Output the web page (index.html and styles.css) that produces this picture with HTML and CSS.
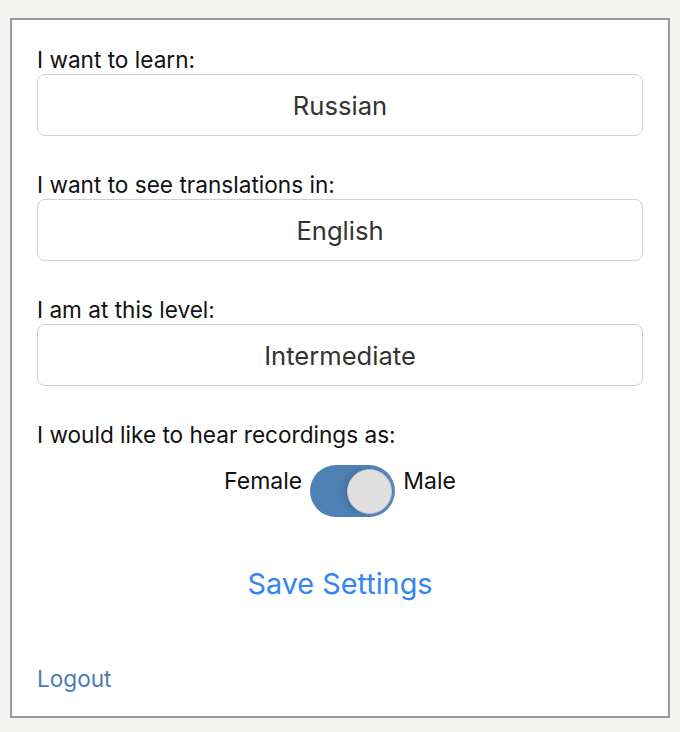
FILE: index.html
```html
<!DOCTYPE html>
<html lang="en">
<head>
    <meta charset="UTF-8">
    <meta name="viewport" content="width=device-width, initial-scale=1.0">
    <title>Settings</title>
    <link rel="stylesheet" href="styles.css">
</head>
<body>
    <div class="card">
        <div class="field">
            <label class="field-label">I want to learn:</label>
            <div class="select-box">Russian</div>
        </div>
        <div class="field">
            <label class="field-label">I want to see translations in:</label>
            <div class="select-box">English</div>
        </div>
        <div class="field">
            <label class="field-label">I am at this level:</label>
            <div class="select-box">Intermediate</div>
        </div>
        <div class="field">
            <label class="field-label">I would like to hear recordings as:</label>
            <div class="voice-row">
                <span class="voice">Female</span>
                <div class="toggle"><div class="knob"></div></div>
                <span class="voice">Male</span>
            </div>
        </div>
        <div class="save">Save Settings</div>
        <a class="logout" href="#">Logout</a>
    </div>
</body>
</html>
```

FILE: styles.css
```css
body {
    font-family: Inter, "Noto Sans", sans-serif;
    background: #f3f3f1;
    margin: 0;
    padding: 18px 10px 0;
    color: #111;
}
.card {
    background: white;
    border: 2px solid #999;
    padding: 28px 25px 23px;
    height: 700px;
    box-sizing: border-box;
    display: flex;
    flex-direction: column;
}
.field {
    margin-bottom: 37px;
}
.field-label {
    display: block;
    font-size: 22.6px;
    line-height: 24px;
    margin-bottom: 2px;
}
.select-box {
    height: 62px;
    box-sizing: border-box;
    border: 1.5px solid #cfcfcf;
    border-radius: 8px;
    display: flex;
    align-items: center;
    justify-content: center;
    font-size: 25.6px;
    color: #333;
}
.voice-row {
    display: flex;
    justify-content: center;
    align-items: center;
    gap: 8px;
    margin-top: 18px;
}
.voice {
    font-size: 23px;
    line-height: 28px;
    margin-bottom: 20px;
}
.toggle {
    width: 85px;
    height: 52px;
    border-radius: 26px;
    background: linear-gradient(to right, #4f81b6 50%, #5b8bc0);
    display: flex;
    justify-content: flex-end;
    align-items: center;
    padding: 3px;
    box-sizing: border-box;
}
.knob {
    width: 45px;
    height: 45px;
    border-radius: 50%;
    background: #e0e0e0;
    border: 1px solid #c7c7c7;
    box-sizing: border-box;
    box-shadow: -3px 0 6px rgba(0, 0, 0, 0.15);
}
.save {
    text-align: center;
    color: #3385f0;
    font-size: 28.8px;
    line-height: 36px;
    margin-top: 12px;
}
.logout {
    margin-top: auto;
    color: #4a7db4;
    font-size: 22.6px;
    line-height: 28px;
    text-decoration: none;
}
```
